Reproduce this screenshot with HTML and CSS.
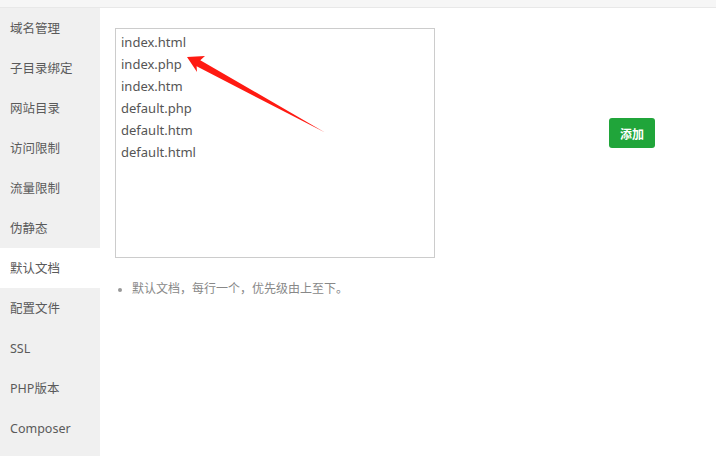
FILE: index.html
```html
<!DOCTYPE html>
<html lang="zh-CN">
<head>
<meta charset="utf-8">
<title>默认文档</title>
<link rel="stylesheet" href="styles.css">
</head>
<body>
<div class="topbar"></div>
<div class="main">
  <ul class="sidebar">
    <li>域名管理</li>
    <li>子目录绑定</li>
    <li>网站目录</li>
    <li>访问限制</li>
    <li>流量限制</li>
    <li>伪静态</li>
    <li class="active">默认文档</li>
    <li>配置文件</li>
    <li>SSL</li>
    <li>PHP版本</li>
    <li>Composer</li>
  </ul>
  <div class="content">
    <div class="row">
      <div class="docs">
        <div>index.html</div>
        <div>index.php</div>
        <div>index.htm</div>
        <div>default.php</div>
        <div>default.htm</div>
        <div>default.html</div>
      </div>
      <button class="btn">添加</button>
    </div>
    <ul class="help">
      <li>默认文档，每行一个，优先级由上至下。</li>
    </ul>
    <svg class="arrow" width="716" height="456" viewBox="0 0 716 456">
      <polygon points="187,57 205,56 200.3,60.2 325,132.5 196.6,66.3 197,72" fill="#ff1a12"/>
    </svg>
  </div>
</div>
</body>
</html>
```
FILE: styles.css
```css
html, body {
  margin: 0;
  padding: 0;
  background: #fff;
  font-family: "Noto Sans", "Noto Sans CJK SC", sans-serif;
  width: 716px;
  height: 456px;
  overflow: hidden;
}
.topbar {
  height: 7px;
  background: #f6f6f6;
  border-bottom: 1px solid #e8e8e8;
}
.main {
  display: flex;
  height: 448px;
}
.sidebar {
  list-style: none;
  margin: 0;
  padding: 0;
  width: 100px;
  background: #f0f0f0;
  flex: none;
}
.sidebar li {
  height: 39px;
  padding-top: 1px;
  line-height: 40px;
  padding-left: 10px;
  font-size: 12.5px;
  color: #5a5a5a;
}
.sidebar li.active {
  background: #fff;
}
.content {
  flex: 1;
  padding: 20px 0 0 15px;
}
.row {
  display: flex;
  align-items: flex-start;
}
.docs {
  width: 308px;
  height: 219px;
  border: 1px solid #ccc;
  padding: 2px 5px 7px 5px;
  font-size: 13px;
  line-height: 22px;
  color: #555;
  flex: none;
}
.btn {
  margin-left: 174px;
  margin-top: 90px;
  width: 46px;
  height: 30px;
  border: 0;
  border-radius: 3px;
  background: #20a53a;
  color: #fff;
  font-family: "Noto Sans CJK SC", sans-serif;
  font-size: 12px;
  font-weight: bold;
  padding: 0;
}
.help {
  margin: 21px 0 0 0;
  padding: 0 0 0 17px;
  font-size: 12px;
  line-height: 20px;
  color: #888;
}
.help li::marker {
  color: #999;
  font-size: 10px;
}
.arrow {
  position: absolute;
  left: 0;
  top: 0;
  pointer-events: none;
}
```
